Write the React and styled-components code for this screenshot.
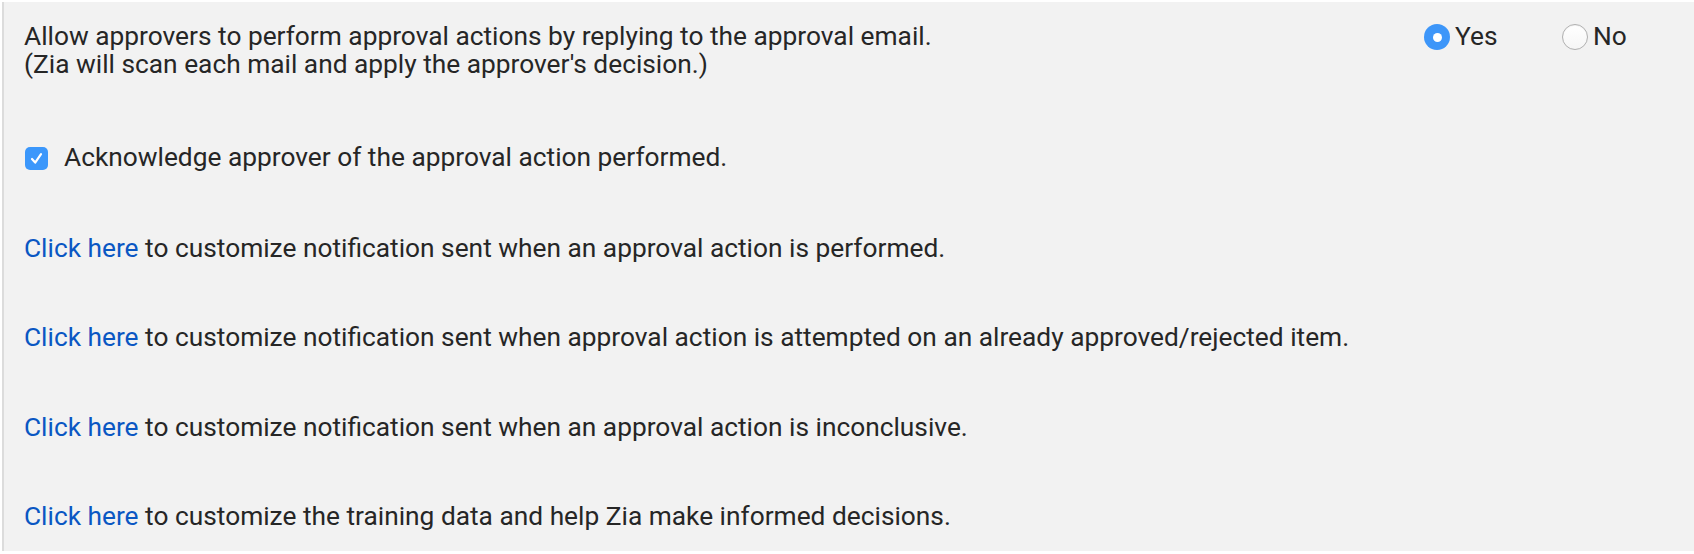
import React from "react";
import styled, { createGlobalStyle } from "styled-components";

const Global = createGlobalStyle`
  html, body { margin: 0; padding: 0; background: #ffffff; }
  body { font-family: Roboto, "Noto Sans", "Liberation Sans", sans-serif; }
`;

const Page = styled.div`
  padding: 2px 0 0 2px;
  height: 554px;
  box-sizing: border-box;
`;

const Panel = styled.section`
  height: 549px;
  box-sizing: border-box;
  background: #f2f2f2;
  border-left: 2px solid #dcdcdc;
  padding: 20px 0 0 20px;
  display: flex;
  flex-direction: column;
  gap: 61.6px;
  color: #262626;
  font-size: 26.3px;
  line-height: 28px;
`;

const TopRow = styled.div`
  display: grid;
  grid-template-columns: 1fr 270px;
  margin-bottom: 3.5px;
`;

const Description = styled.div`
  display: flex;
  flex-direction: column;
  white-space: nowrap;
`;

const RadioGroup = styled.div`
  display: flex;
  align-items: center;
  height: 28px;
`;

const RadioOption = styled.label`
  display: flex;
  align-items: center;
  gap: 5px;
  width: ${(p) => p.$width || "auto"};
`;

const RadioCircle = styled.span`
  width: 26px;
  height: 26px;
  border-radius: 50%;
  box-sizing: border-box;
  display: flex;
  align-items: center;
  justify-content: center;
  margin-top: 2px;
  background: ${(p) => (p.$checked ? "#3d96f9" : "linear-gradient(#ffffff, #f6f6f6)")};
  border: ${(p) => (p.$checked ? "none" : "1px solid #b0b0b0")};
  box-shadow: ${(p) => (p.$checked ? "none" : "inset 0 1px 1px rgba(0,0,0,0.05)")};
`;

const RadioDot = styled.span`
  width: 9px;
  height: 9px;
  border-radius: 50%;
  background: #ffffff;
`;

const CheckRow = styled.label`
  display: flex;
  align-items: center;
  gap: 16px;
  height: 28px;
  margin-bottom: 1px;
`;

const CheckBox = styled.span`
  width: 23px;
  height: 23px;
  border-radius: 5px;
  background: #3b97fb;
  display: flex;
  align-items: center;
  justify-content: center;
  margin-top: 3px;
  margin-left: 1px;
`;

const LinkRow = styled.div`
  height: 28px;
  white-space: nowrap;
`;

const Link = styled.a`
  color: #0a57c3;
  text-decoration: none;
  cursor: pointer;
`;

const rows = [
  "to customize notification sent when an approval action is performed.",
  "to customize notification sent when approval action is attempted on an already approved/rejected item.",
  "to customize notification sent when an approval action is inconclusive.",
  "to customize the training data and help Zia make informed decisions.",
];

export default function App() {
  return (
    <>
      <Global />
      <Page>
        <Panel>
          <TopRow>
            <Description>
              <span>Allow approvers to perform approval actions by replying to the approval email.</span>
              <span>(Zia will scan each mail and apply the approver's decision.)</span>
            </Description>
            <RadioGroup>
              <RadioOption $width="138px">
                <RadioCircle $checked>
                  <RadioDot />
                </RadioCircle>
                Yes
              </RadioOption>
              <RadioOption>
                <RadioCircle />
                No
              </RadioOption>
            </RadioGroup>
          </TopRow>
          <CheckRow>
            <CheckBox>
              <svg width="19" height="19" viewBox="0 0 19 19">
                <path d="M5 10 L8.2 13.6 L14 5.2" fill="none" stroke="#fff" strokeWidth="2.2" strokeLinecap="round" strokeLinejoin="round" />
              </svg>
            </CheckBox>
            Acknowledge approver of the approval action performed.
          </CheckRow>
          {rows.map((t) => (
            <LinkRow key={t}>
              <Link>Click here</Link> {t}
            </LinkRow>
          ))}
        </Panel>
      </Page>
    </>
  );
}
